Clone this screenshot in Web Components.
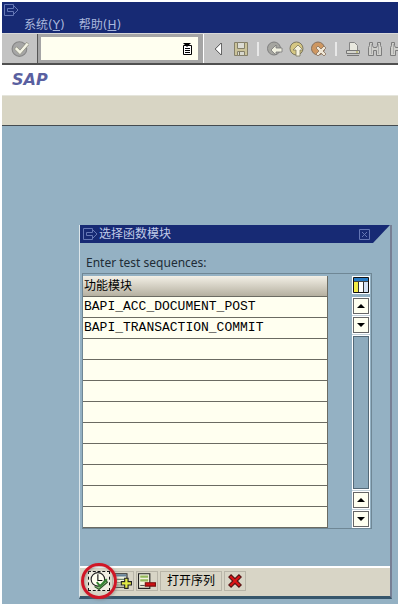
<!DOCTYPE html>
<html lang="zh-CN">
<head>
<meta charset="utf-8">
<meta name="viewport" content="width=device-width, initial-scale=1">
<title>SAP</title>
<style>
  body {
    margin: 2px;
    background: #fff;
    color: #000;
    font: 12px/16px "DejaVu Sans", "Noto Sans CJK SC", sans-serif;
  }
</style>
</head>
<body>
<sap-screen>
  <sap-menubar slot="menu">
    <a href="#system">系统(<u>Y</u>)</a>
    <a href="#help">帮助(<u>H</u>)</a>
  </sap-menubar>
  <sap-toolbar slot="toolbar"></sap-toolbar>
  <span slot="title">SAP</span>
  <sap-dialog heading="选择函数模块">
    <sap-sequence-table label="Enter test sequences:" column="功能模块" rows="11"
      values="BAPI_ACC_DOCUMENT_POST,BAPI_TRANSACTION_COMMIT"></sap-sequence-table>
    <sap-button slot="actions" icon="execute" label="执行" focused marked></sap-button>
    <sap-button slot="actions" icon="insert" label="插入行"></sap-button>
    <sap-button slot="actions" icon="remove" label="删除行"></sap-button>
    <sap-button slot="actions">打开序列</sap-button>
    <sap-button slot="actions" icon="close" label="取消"></sap-button>
  </sap-dialog>
</sap-screen>

<script>
// Drawings of all icons, each on a 16 by 16 grid.
const icons = {
  exit: '<path d="M10.500 4V2.500h-9v11h9V12M4.500 6.500h6v-3L15 8l-4.500 4.500v-3h-6z" fill="none" stroke="#6577b5"/>',
  check: '<circle cx="7.500" cy="8" r="6.500" fill="#a6a6a6" stroke="#878787"/><path d="M3 8l2-2 3 3 6-7 2 2-8 9z" fill="#f3f3e5" stroke="#8b8b7d" stroke-width=".7"/>',
  list: '<path d="M3.500 4.500h8v9h-8z" fill="#fff" stroke="#000"/><path d="M3 2h8L7 6z"/><path d="M5 7.500h5M5 9.500h5M5 11.500h5" stroke="#000"/>',
  left: '<path d="M10 3v10L5 8z" fill="#fff"/><path d="M10.500 2v12M10 2L4 8l6 6" fill="none" stroke="#666"/>',
  save: '<path d="M1.500 1.500h13v13h-13z" fill="#cbc39a" stroke="#85806a"/><path d="M4.500 1.500h7v6h-7z" fill="#dcdcd4" stroke="#85806a"/><path d="M4.500 10.500h7v4h-7z" fill="#d8d8ce" stroke="#85806a"/><path d="M6.500 11v3" stroke="#77735e"/>',
  back: '<circle cx="7" cy="7.500" r="6.500" fill="#a5a5a0" stroke="#7f7f7f"/><path d="M4 9l5-5v3h6v4H9v3z" fill="#efefdf" stroke="#777" stroke-width=".8"/>',
  up: '<circle cx="7.500" cy="7.500" r="6.500" fill="#d5c783" stroke="#7d7860"/><path d="M9 4l5 5h-3v6H7V9H4z" fill="#f6f3df" stroke="#7d7860" stroke-width=".8"/>',
  cancel: '<circle cx="7" cy="7.500" r="6.500" fill="#ce9761" stroke="#86705c"/><path d="M5 7l2-2 3 3 3-3 2 2-3 3 3 3-2 2-3-3-3 3-2-2 3-3z" fill="#efe6d5" stroke="#86705c" stroke-width=".8"/>',
  print: '<path d="M4.500 1.500h5l3 3v5h-8z" fill="#e8e8df" stroke="#858585"/><path d="M1.500 9.500h13v3h-13z" fill="#d5d5ce" stroke="#777"/><path d="M2 14.500h12" stroke="#777"/><path d="M11 11h2" stroke="#aaa438"/>',
  find: '<path d="M2.500 1.500h3v3l1 2h3l1-2v-3h3v3l1 2v8h-5v-5h-3v5h-5v-8l1-2z" fill="#cfcfcb" stroke="#7c7c7c"/><path d="M4.500 3v10M11.500 3v10" stroke="#aaa"/>',
  execute: '<path d="M4 13l4 2.500L15.500 9l-3-3" fill="#8abf7e" stroke="#2c5427"/><circle cx="7" cy="6.500" r="6" fill="#fffff0" stroke="#222"/><path d="M7 2v5.500h4" fill="none" stroke="#111"/><path d="M6 9l3 3.500 6-6" fill="none" stroke="#338432" stroke-width="1.800"/>',
  insert: '<path d="M.5 1.500h11v12H.5z" fill="#f3f3df" stroke="#222"/><path d="M1 3h10" stroke="#65829a" stroke-width="2"/><path d="M2 6.500h7M2 9.500h4M2 11.500h4" stroke="#6d826b"/><path d="M9.500 5.500h3v3h3v3h-3v3h-3v-3h-3v-3h3z" fill="#e3ea45" stroke="#222"/>',
  remove: '<path d="M.5 1.500h10v13H.5z" fill="#f3f3df" stroke="#222"/><path d="M2 4h7M2 7.500h7" stroke="#93b85c" stroke-width="2"/><path d="M2 12h4" stroke="#555"/><path d="M6.500 9.500h9v3h-9z" fill="#d20f12" stroke="#711"/>',
  close: '<path d="M2.500 4.500l2-2L8 6l3.500-3.500 2 2L10 8l3.500 3.500-2 2L8 10l-3.500 3.500-2-2L6 8z" fill="#df1417" stroke="#571111"/>',
  dismiss: '<path d="M3.500 3.500h10v10h-10zM6 6l5 5M11 6l-5 5" fill="none" stroke="#6577b5"/>',
  columns: '<path d="M.5.500h15v15H.5z" fill="#fff" stroke="#111"/><path d="M1 1h14v3H1z" fill="#287bc4"/><path d="M1 4h5v11H1z" fill="#f4ed46"/><path d="M11 4h4v11h-4z" fill="#d5e2f3"/><path d="M5.500 4v11M10.500 4v11" stroke="#333"/><path d="M1 4.500h14" stroke="#444"/>',
  arrowup: '<path d="M4 10h8L8 6z" fill="#000"/>',
  arrowdown: '<path d="M4 6h8l-4 4z" fill="#000"/>'
}

/**
 * Gives the markup of one icon.
 *
 * @param {string} name - The key of the icon.
 * @returns {string} The svg markup.
 */
const icon = (name) => `<svg width="16" height="16" viewBox="0 0 16 16" aria-hidden="true">${icons[name]}</svg>`

const screenTemplate = document.createElement('template')
screenTemplate.innerHTML = `
  <style>
    :host {
      display: block;
      overflow: hidden;
      background: #94b1c3;
    }

    .title {
      height: 30px;
      box-sizing: border-box;
      margin: 0;
      padding: 5px 10px;
      background: #fff;
      color: #5a60a0;
      font: italic bold 16px/20px "DejaVu Sans", sans-serif;
    }

    .functions {
      height: 29px;
      border-top: 1px solid #e5e5dc;
      border-bottom: 1px solid #444b50;
      background: #d8d5c4;
    }

    main {
      padding: 99px 6px 5px 77px;
    }
  </style>

  <slot name="menu"></slot>
  <slot name="toolbar"></slot>
  <h1 class="title"><slot name="title"></slot></h1>
  <div class="functions"></div>
  <main><slot></slot></main>
`

/**
 * The whole session window.
 */
class SapScreen extends HTMLElement {
  constructor () {
    super()
    this.attachShadow({ mode: 'open' }).append(screenTemplate.content.cloneNode(true))
  }
}

const menubarTemplate = document.createElement('template')
menubarTemplate.innerHTML = `
  <style>
    :host {
      display: block;
      background: #172a74;
    }

    svg {
      display: block;
      margin-left: 1px;
    }

    .system {
      height: 15px;
    }

    nav {
      display: flex;
      gap: 14px;
      height: 16px;
      padding-left: 22px;
    }

    ::slotted(a) {
      color: #a9b7dc;
      text-decoration: none;
    }
  </style>

  <div class="system">${icon('exit')}</div>
  <nav><slot></slot></nav>
`

/**
 * The menu bar with the system icon above the menus.
 */
class SapMenubar extends HTMLElement {
  constructor () {
    super()
    this.attachShadow({ mode: 'open' }).append(menubarTemplate.content.cloneNode(true))
  }
}

const toolbarTemplate = document.createElement('template')
toolbarTemplate.innerHTML = `
  <style>
    :host {
      display: flex;
      height: 32px;
      box-sizing: border-box;
      border-top: 1px solid #d8d8d8;
      border-bottom: 2px solid #505050;
      background: #c3c3c3;
      overflow: hidden;
    }

    button {
      flex: none;
      width: 16px;
      height: 16px;
      padding: 0;
      border: 0;
      background: none;
    }

    svg {
      display: block;
    }

    .enter {
      flex: none;
      display: flex;
      align-items: center;
      justify-content: center;
      width: 35px;
      border-right: 1px solid #555;
    }

    .enter svg {
      width: 18px;
      height: 18px;
    }

    .enter button {
      width: 18px;
      height: 18px;
    }

    .command {
      flex: none;
      display: flex;
      align-items: center;
      padding: 0 5px 0 3px;
      border-right: 1px solid #fff;
      background: #a5a5a5;
    }

    .field {
      display: flex;
      align-items: center;
      width: 157px;
      height: 23px;
      background: #fffff0;
    }

    input {
      flex: 1;
      min-width: 0;
      padding: 0 4px;
      border: 0;
      outline: 0;
      background: none;
      font: inherit;
    }

    .field button {
      margin-right: 2px;
    }

    .tools {
      display: flex;
      align-items: center;
      gap: 6px;
      padding-left: 7px;
    }

    .line {
      flex: none;
      width: 2px;
      height: 14px;
      margin: 0 2px;
      background: #e8e8e8;
    }
  </style>

  <div class="enter"><button aria-label="回车">${icon('check')}</button></div>
  <div class="command">
    <div class="field">
      <input type="text" aria-label="命令">
      <button aria-label="历史">${icon('list')}</button>
    </div>
  </div>
  <div class="tools">
    <button aria-label="收起">${icon('left')}</button>
    <button aria-label="保存">${icon('save')}</button>
    <span class="line"></span>
    <button aria-label="返回">${icon('back')}</button>
    <button aria-label="退出">${icon('up')}</button>
    <button aria-label="取消">${icon('cancel')}</button>
    <span class="line"></span>
    <button aria-label="打印">${icon('print')}</button>
    <button aria-label="查找">${icon('find')}</button>
    <button aria-label="查找下一个">${icon('find')}</button>
  </div>
`

/**
 * The standard toolbar with the command field.
 */
class SapToolbar extends HTMLElement {
  constructor () {
    super()
    this.attachShadow({ mode: 'open' }).append(toolbarTemplate.content.cloneNode(true))
  }
}

const dialogTemplate = document.createElement('template')
dialogTemplate.innerHTML = `
  <style>
    :host {
      display: block;
      border: solid;
      border-width: 0 2px 3px 1px;
      border-color: #777f94 #777f94 #36566b #dce6ea;
    }

    header {
      display: flex;
      align-items: center;
      gap: 1px;
      height: 18px;
      padding: 0 18px 0 2px;
      background: #172a74;
      color: #c0cae8;
      clip-path: polygon(0 0, 100% 0, calc(100% - 17px) 100%, 0 100%);
    }

    h2 {
      flex: 1;
      margin: 0;
      font: inherit;
    }

    svg {
      display: block;
    }

    button {
      padding: 0;
      border: 0;
      background: none;
    }

    .body {
      padding: 12px 18px 37px 2px;
    }

    footer {
      display: flex;
      align-items: center;
      gap: 2px;
      height: 26px;
      padding: 0 0 2px 8px;
      border-top: 2px solid #fff;
      background: #d8d5c6;
    }
  </style>

  <header>
    ${icon('exit')}
    <h2></h2>
    <button aria-label="关闭">${icon('dismiss')}</button>
  </header>
  <div class="body"><slot></slot></div>
  <footer><slot name="actions"></slot></footer>
`

/**
 * A dialog with a title bar, a body and a row of actions.
 */
class SapDialog extends HTMLElement {
  constructor () {
    super()
    this.attachShadow({ mode: 'open' }).append(dialogTemplate.content.cloneNode(true))
  }

  /**
   * Called when the element is inserted into the DOM.
   */
  connectedCallback () {
    this.shadowRoot.querySelector('h2').textContent = this.getAttribute('heading')
  }
}

const tableTemplate = document.createElement('template')
tableTemplate.innerHTML = `
  <style>
    :host {
      display: block;
    }

    .label {
      padding: 0 4px 2px;
      color: #202c36;
      font-family: "Noto Sans", sans-serif;
    }

    .frame {
      display: flex;
      justify-content: space-between;
      gap: 24px;
      padding: 2px 1px 0 0;
      border: 1px solid #6f8795;
    }

    table {
      flex: 1;
      border-collapse: separate;
      border-spacing: 0;
      background: #fffff0;
    }

    th, td {
      height: 20px;
      padding: 0 1px;
      border-right: 1px solid #6b6b62;
      border-bottom: 1px solid #6b6b62;
      text-align: left;
    }

    th {
      background: linear-gradient(#f3f0e6, #b5b0a0);
      font-weight: normal;
    }

    td {
      font: 13px/16px "Liberation Mono", monospace;
    }

    .side {
      display: flex;
      flex-direction: column;
      gap: 3px;
      width: 18px;
    }

    button {
      box-sizing: border-box;
      width: 18px;
      height: 18px;
      padding: 0;
      border: 1px solid #fff;
      background: #d0dbe0;
    }

    svg {
      display: block;
    }
  </style>

  <div class="label" id="label"></div>
  <div class="frame">
    <table aria-labelledby="label">
      <thead><tr><th></th></tr></thead>
      <tbody></tbody>
    </table>
    <div class="side">
      <button aria-label="列设置">${icon('columns')}</button>
      <sap-scrollbar></sap-scrollbar>
    </div>
  </div>
`

/**
 * The table of test sequences, filled up with empty rows.
 */
class SapSequenceTable extends HTMLElement {
  constructor () {
    super()
    this.attachShadow({ mode: 'open' }).append(tableTemplate.content.cloneNode(true))
  }

  /**
   * Called when the element is inserted into the DOM.
   */
  connectedCallback () {
    const values = this.getAttribute('values').split(',')
    const body = this.shadowRoot.querySelector('tbody')

    this.shadowRoot.querySelector('.label').textContent = this.getAttribute('label')
    this.shadowRoot.querySelector('th').textContent = this.getAttribute('column')
    body.innerHTML = ''

    for (let i = 0; i < Number(this.getAttribute('rows')); i++) {
      body.insertRow().insertCell().textContent = values[i] || ''
    }
  }
}

const scrollbarTemplate = document.createElement('template')
scrollbarTemplate.innerHTML = `
  <style>
    :host {
      flex: 1;
      display: flex;
      flex-direction: column;
      gap: 1px;
      background: #c4d2da;
    }

    button {
      box-sizing: border-box;
      display: flex;
      align-items: center;
      justify-content: center;
      width: 18px;
      height: 18px;
      padding: 0;
      border: 1px solid #fff;
      outline: 1px solid #666;
      outline-offset: -2px;
      background: #fffff0;
    }

    .track {
      flex: 1;
      border: 1px solid #fff;
      outline: 1px solid #546977;
      outline-offset: -2px;
      background: #8eabbd;
    }
  </style>

  <button aria-label="第一行">${icon('arrowup')}</button>
  <button aria-label="下一行">${icon('arrowdown')}</button>
  <div class="track"></div>
  <button aria-label="上一行">${icon('arrowup')}</button>
  <button aria-label="最后一行">${icon('arrowdown')}</button>
`

/**
 * The scrollbar with a pair of arrows at each end.
 */
class SapScrollbar extends HTMLElement {
  constructor () {
    super()
    this.attachShadow({ mode: 'open' }).append(scrollbarTemplate.content.cloneNode(true))
  }
}

const buttonTemplate = document.createElement('template')
buttonTemplate.innerHTML = `
  <style>
    :host {
      display: block;
      position: relative;
    }

    button {
      display: flex;
      align-items: center;
      box-sizing: border-box;
      height: 20px;
      padding: 0 6px;
      border: 1px solid #b8b5a8;
      background: none;
      color: inherit;
      font: inherit;
    }

    svg {
      width: 18px;
      height: 18px;
    }

    :host([icon]) button {
      padding: 0 1px;
    }

    :host([focused]) button {
      border: 1px dashed #111;
      background: #f0eee2;
    }

    /* Red ring laid over the button to point it out */
    :host([marked])::after {
      content: "";
      position: absolute;
      z-index: 1;
      inset: -8px -7px;
      border: 3px solid #d01626;
      border-radius: 50%;
      box-shadow: 1px 1px 3px #7778, inset 1px 1px 2px #7778;
      pointer-events: none;
    }
  </style>

  <button><slot></slot></button>
`

/**
 * A button that shows an icon or a text.
 */
class SapButton extends HTMLElement {
  constructor () {
    super()
    this.attachShadow({ mode: 'open' }).append(buttonTemplate.content.cloneNode(true))
  }

  /**
   * Called when the element is inserted into the DOM.
   */
  connectedCallback () {
    if (this.hasAttribute('icon')) {
      const button = this.shadowRoot.querySelector('button')
      button.innerHTML = icon(this.getAttribute('icon'))
      button.setAttribute('aria-label', this.getAttribute('label'))
    }
  }
}

// Define the custom elements.
customElements.define('sap-screen', SapScreen)
customElements.define('sap-menubar', SapMenubar)
customElements.define('sap-toolbar', SapToolbar)
customElements.define('sap-dialog', SapDialog)
customElements.define('sap-scrollbar', SapScrollbar)
customElements.define('sap-sequence-table', SapSequenceTable)
customElements.define('sap-button', SapButton)
</script>
</body>
</html>
